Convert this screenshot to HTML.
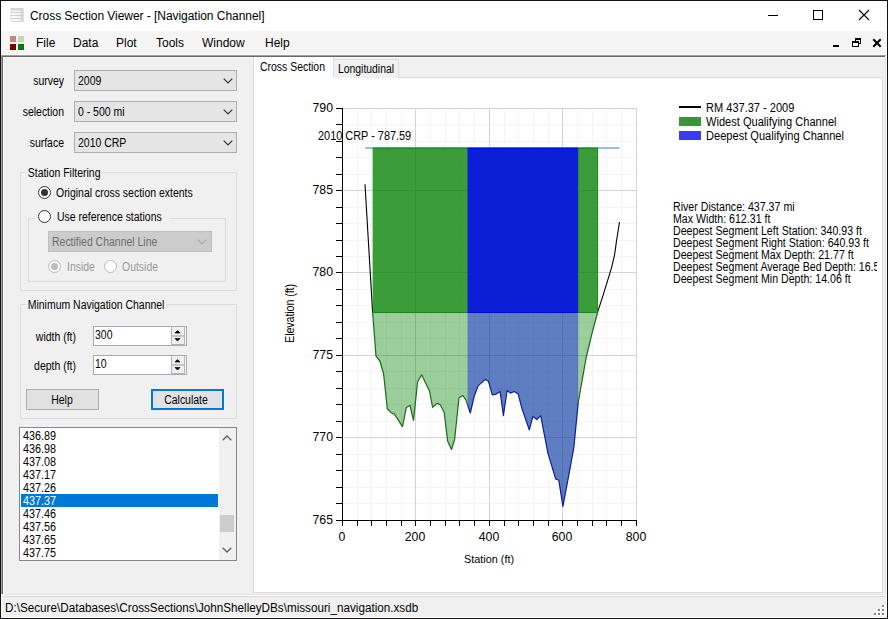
<!DOCTYPE html>
<html><head><meta charset="utf-8">
<style>
*{margin:0;padding:0;box-sizing:border-box}
html,body{width:888px;height:619px;overflow:hidden;background:#f0f0f0;font-family:"Liberation Sans",sans-serif;color:#000}
.a{position:absolute}
.t{position:absolute;white-space:nowrap;font-size:12.0px;line-height:1;transform:scaleX(0.872);transform-origin:0 0}
.mt{position:absolute;white-space:nowrap;font-size:12px;line-height:1}
.combo{position:absolute;background:#e5e5e5;border:1px solid #adadad}
.radio{position:absolute;width:13px;height:13px;border-radius:50%;border:1px solid #333;background:#fff}
.gb{position:absolute;border:1px solid #dcdcdc}
.btn{position:absolute;background:#e1e1e1;border:1px solid #adadad}
</style></head><body>
<!-- window frame -->
<div class="a" style="left:0;top:0;width:888px;height:31px;background:#fff"></div>
<div class="a" style="left:0;top:31px;width:888px;height:24px;background:#f5f5f5"></div>
<div class="a" style="left:0;top:54px;width:888px;height:1px;background:#fcfcfc"></div>
<div class="a" style="left:1px;top:55px;width:885px;height:1px;background:#a0a0a0"></div>
<div class="a" style="left:2px;top:56px;width:883px;height:1px;background:#696969"></div>
<div class="a" style="left:1px;top:55px;width:1px;height:539px;background:#a0a0a0"></div>
<div class="a" style="left:2px;top:56px;width:1px;height:538px;background:#696969"></div>
<div class="a" style="left:3px;top:57px;width:1px;height:537px;background:#fff"></div>
<div class="a" style="left:3px;top:57px;width:882px;height:1px;background:#f8f8f8"></div>
<div class="a" style="left:885px;top:57px;width:1px;height:538px;background:#e3e3e3"></div>
<div class="a" style="left:886px;top:31px;width:1px;height:587px;background:#fff"></div>
<div class="a" style="left:1px;top:617px;width:886px;height:1px;background:#fff"></div>
<!-- outer black border -->
<div class="a" style="left:0;top:0;width:888px;height:1px;background:#111"></div>
<div class="a" style="left:0;top:0;width:1px;height:619px;background:#111"></div>
<div class="a" style="left:887px;top:0;width:1px;height:619px;background:#111"></div>
<div class="a" style="left:0;top:618px;width:888px;height:1px;background:#111"></div>

<!-- title icon -->
<svg class="a" style="left:9px;top:7px" width="16" height="16" viewBox="0 0 16 16">
<defs><linearGradient id="ig" x1="0" x2="1" y1="0" y2="0"><stop offset="0" stop-color="#e8e8e8"/><stop offset="0.2" stop-color="#fbfbfb"/><stop offset="0.7" stop-color="#f0f0f0"/><stop offset="1" stop-color="#c8c8c8"/></linearGradient></defs>
<rect x="1.5" y="1" width="13" height="14" rx="1.5" fill="url(#ig)"/>
<rect x="1.5" y="1" width="13" height="2.5" rx="1" fill="#d4d4d4"/>
<line x1="1.5" y1="5.5" x2="14.5" y2="5.5" stroke="#d0d0d0"/>
<line x1="1.5" y1="8.5" x2="14.5" y2="8.5" stroke="#d0d0d0"/>
<line x1="1.5" y1="11.5" x2="14.5" y2="11.5" stroke="#d0d0d0"/>
<line x1="2" y1="14.5" x2="14" y2="14.5" stroke="#d8d8d8"/>
</svg>
<div class="mt" style="left:30px;top:10px;letter-spacing:-0.05px">Cross Section Viewer - [Navigation Channel]</div>
<!-- window buttons -->
<div class="a" style="left:768px;top:15px;width:10px;height:1px;background:#000"></div>
<div class="a" style="left:813px;top:10px;width:10px;height:10px;border:1px solid #000"></div>
<svg class="a" style="left:858px;top:9px" width="12" height="12" viewBox="0 0 12 12"><path d="M1 1L11 11M11 1L1 11" stroke="#000" stroke-width="1.1"/></svg>

<!-- menu -->
<div class="a" style="left:10px;top:36px;width:6px;height:6px;background:#c38585"></div>
<div class="a" style="left:18px;top:36px;width:6px;height:6px;background:#c8d8aa"></div>
<div class="a" style="left:10px;top:44px;width:6px;height:6px;background:#7a0000"></div>
<div class="a" style="left:18px;top:44px;width:6px;height:6px;background:#007a10"></div>
<div class="mt" style="left:36px;top:37px">File</div>
<div class="mt" style="left:73px;top:37px">Data</div>
<div class="mt" style="left:116px;top:37px">Plot</div>
<div class="mt" style="left:156px;top:37px">Tools</div>
<div class="mt" style="left:202px;top:37px">Window</div>
<div class="mt" style="left:265px;top:37px">Help</div>
<div class="a" style="left:833px;top:45px;width:6px;height:2px;background:#000"></div>
<svg class="a" style="left:850px;top:36px" width="14" height="12" viewBox="0 0 14 12" shape-rendering="crispEdges">
<path d="M5 2h6v2h-6zM10 4h1v4h-1zM9 7h1v1h-1zM5 4h1v1h-1z" fill="#000"/>
<path d="M2 5h7v2h-7zM2 7h1v4h-1zM8 7h1v4h-1zM2 10h7v1h-7z" fill="#000"/>
<path d="M3 7h5v3h-5z" fill="#fff"/>
</svg>
<svg class="a" style="left:872px;top:38px" width="10" height="10" viewBox="0 0 10 10"><path d="M2 2L8 8M8 2L2 8" stroke="#000" stroke-width="2" stroke-linecap="square"/></svg>


<!-- left panel -->

<div class="t" style="left:-36px;top:74.84px;width:100px;text-align:right;transform-origin:100% 0;">survey</div>
<div class="combo" style="left:74px;top:70px;width:163px;height:21px"></div>
<div class="t" style="left:77.5px;top:74.84px;">2009</div>
<svg class="a" style="left:223px;top:78px" width="10" height="6" viewBox="0 0 10 6"><path d="M0.7 0.7L5 5L9.3 0.7" fill="none" stroke="#333" stroke-width="1.2"/></svg>
<div class="t" style="left:-36px;top:105.84px;width:100px;text-align:right;transform-origin:100% 0;">selection</div>
<div class="combo" style="left:74px;top:101px;width:163px;height:21px"></div>
<div class="t" style="left:77.9px;top:105.84px;">0 - 500 mi</div>
<svg class="a" style="left:223px;top:109px" width="10" height="6" viewBox="0 0 10 6"><path d="M0.7 0.7L5 5L9.3 0.7" fill="none" stroke="#333" stroke-width="1.2"/></svg>
<div class="t" style="left:-36px;top:136.84px;width:100px;text-align:right;transform-origin:100% 0;">surface</div>
<div class="combo" style="left:74px;top:132px;width:163px;height:21px"></div>
<div class="t" style="left:77.5px;top:136.84px;">2010 CRP</div>
<svg class="a" style="left:223px;top:140px" width="10" height="6" viewBox="0 0 10 6"><path d="M0.7 0.7L5 5L9.3 0.7" fill="none" stroke="#333" stroke-width="1.2"/></svg>

<div class="gb" style="left:20px;top:172px;width:217px;height:119px"></div>
<div class="t" style="left:27.5px;top:166.84px;background:#f0f0f0;padding:0 2px;margin-left:-2px">Station Filtering</div>
<div class="radio" style="left:38px;top:186px"></div>
<div class="a" style="left:41px;top:189px;width:7px;height:7px;border-radius:50%;background:#333"></div>
<div class="t" style="left:55.9px;top:186.84px;">Original cross section extents</div>
<div class="gb" style="left:28px;top:218px;width:198px;height:64px"></div>
<div class="a" style="left:35px;top:212px;width:134px;height:12px;background:#f0f0f0"></div>
<div class="radio" style="left:38px;top:210px"></div>
<div class="t" style="left:56.5px;top:210.84px;">Use reference stations</div>
<div class="a" style="left:48px;top:231px;width:164px;height:21px;background:#cccccc;border:1px solid #bfbfbf"></div>
<div class="t" style="left:51.7px;top:235.84px;color:#6d6d6d">Rectified Channel Line</div>
<svg class="a" style="left:197px;top:239px" width="10" height="6" viewBox="0 0 10 6"><path d="M0.7 0.7L5 5L9.3 0.7" fill="none" stroke="#a8a8a8" stroke-width="1.2"/></svg>
<div class="radio" style="left:48px;top:260px;border-color:#bcbcbc;background:#f8f8f8"></div>
<div class="a" style="left:51px;top:263px;width:7px;height:7px;border-radius:50%;background:#bcbcbc"></div>
<div class="t" style="left:66.5px;top:261.34px;color:#9a9a9a">Inside</div>
<div class="radio" style="left:104px;top:260px;border-color:#bcbcbc;background:#fff"></div>
<div class="t" style="left:122.3px;top:261.34px;color:#9a9a9a">Outside</div>

<div class="gb" style="left:20px;top:304px;width:217px;height:115px"></div>
<div class="t" style="left:28.0px;top:298.84px;background:#f0f0f0;padding:0 2px;margin-left:-2px">Minimum Navigation Channel</div>
<div class="t" style="left:-24.5px;top:330.84px;width:100px;text-align:right;transform-origin:100% 0;">width (ft)</div>
<div class="a" style="left:93px;top:326px;width:94px;height:20px;background:#fff;border:1px solid #a6aab2"></div>
<div class="t" style="left:94.5px;top:329.34px;">300</div>
<div class="t" style="left:-24.5px;top:359.84px;width:100px;text-align:right;transform-origin:100% 0;">depth (ft)</div>
<div class="a" style="left:93px;top:355px;width:94px;height:20px;background:#fff;border:1px solid #a6aab2"></div>
<div class="t" style="left:94.5px;top:358.34px;">10</div>
<div class="a" style="left:171px;top:327px;width:14px;height:18px;background:#f0f0f0;border:1px solid #b4b4b4;border-top:none"></div>
<div class="a" style="left:172px;top:335px;width:12px;height:2px;background:#c4c4c4"></div>
<svg class="a" style="left:173px;top:329px" width="9" height="14" viewBox="0 0 9 14"><path d="M2 4L4.5 1.5L7 4z" fill="#000" stroke="#000" stroke-width="0.7" stroke-linejoin="round"/><path d="M2 9.5L4.5 12L7 9.5z" fill="#000" stroke="#000" stroke-width="0.7" stroke-linejoin="round"/></svg>
<div class="a" style="left:171px;top:356px;width:14px;height:18px;background:#f0f0f0;border:1px solid #b4b4b4;border-top:none"></div>
<div class="a" style="left:172px;top:364px;width:12px;height:2px;background:#c4c4c4"></div>
<svg class="a" style="left:173px;top:358px" width="9" height="14" viewBox="0 0 9 14"><path d="M2 4L4.5 1.5L7 4z" fill="#000" stroke="#000" stroke-width="0.7" stroke-linejoin="round"/><path d="M2 9.5L4.5 12L7 9.5z" fill="#000" stroke="#000" stroke-width="0.7" stroke-linejoin="round"/></svg>
<div class="btn" style="left:26px;top:389px;width:73px;height:21px"></div>
<div class="t" style="left:11.799999999999997px;top:394.34px;width:100px;text-align:center;transform-origin:50% 0;">Help</div>
<div class="btn" style="left:151px;top:389px;width:73px;height:21px;border:2px solid #0078d7"></div>
<div class="t" style="left:136.2px;top:394.34px;width:100px;text-align:center;transform-origin:50% 0;">Calculate</div>

<div class="a" style="left:19px;top:427px;width:218px;height:134px;background:#fff;border:1px solid #828790"></div>
<div class="t" style="left:22.7px;top:429.64px;transform:scaleX(0.901)">436.89</div>
<div class="t" style="left:22.7px;top:442.64px;transform:scaleX(0.901)">436.98</div>
<div class="t" style="left:22.7px;top:455.64px;transform:scaleX(0.901)">437.08</div>
<div class="t" style="left:22.7px;top:468.64px;transform:scaleX(0.901)">437.17</div>
<div class="t" style="left:22.7px;top:481.64px;transform:scaleX(0.901)">437.26</div>
<div class="a" style="left:21px;top:494px;width:197px;height:13px;background:#0078d7"></div>
<div class="t" style="left:22.7px;top:494.64px;transform:scaleX(0.901);color:#fff">437.37</div>
<div class="t" style="left:22.7px;top:507.64px;transform:scaleX(0.901)">437.46</div>
<div class="t" style="left:22.7px;top:520.64px;transform:scaleX(0.901)">437.56</div>
<div class="t" style="left:22.7px;top:533.64px;transform:scaleX(0.901)">437.65</div>
<div class="t" style="left:22.7px;top:546.64px;transform:scaleX(0.901)">437.75</div>
<div class="a" style="left:219px;top:428px;width:17px;height:132px;background:#f0f0f0"></div>
<div class="a" style="left:220px;top:515px;width:14px;height:17px;background:#cdcdcd"></div>
<svg class="a" style="left:222px;top:435px" width="10" height="6" viewBox="0 0 10 6"><path d="M0.7 5.3L5 1L9.3 5.3" fill="none" stroke="#606060" stroke-width="1.3"/></svg>
<svg class="a" style="left:222px;top:547px" width="10" height="6" viewBox="0 0 10 6"><path d="M0.7 0.7L5 5L9.3 0.7" fill="none" stroke="#606060" stroke-width="1.3"/></svg>
<div class="a" style="left:253px;top:57px;width:1px;height:537px;background:#dcdcdc"></div>


<!-- right tab control -->

<div class="a" style="left:253px;top:77px;width:630px;height:516px;background:#fff;border:1px solid #dcdcdc"></div>
<div class="a" style="left:333px;top:59px;width:66px;height:19px;background:#f0f0f0;border:1px solid #dcdcdc;border-bottom:none"></div>
<div class="a" style="left:253px;top:57px;width:81px;height:21px;background:#fff;border:1px solid #dcdcdc;border-top:none;border-bottom:none"></div>
<div class="a" style="left:260.2px;top:60.84px;font-size:12px;line-height:1;white-space:nowrap;transform:scaleX(0.87);transform-origin:0 0;">Cross Section</div>
<div class="a" style="left:337.6px;top:62.54px;font-size:12px;line-height:1;white-space:nowrap;transform:scaleX(0.866);transform-origin:0 0;">Longitudinal</div>
<svg class="a" style="left:0;top:0" width="888" height="619" viewBox="0 0 888 619">
<path d="M357.5 108V520M371.5 108V520M386.5 108V520M401.5 108V520M430.5 108V520M445.5 108V520M459.5 108V520M474.5 108V520M504.5 108V520M518.5 108V520M533.5 108V520M548.5 108V520M577.5 108V520M592.5 108V520M606.5 108V520M621.5 108V520M342 503.5H636M342 487.5H636M342 470.5H636M342 454.5H636M342 421.5H636M342 404.5H636M342 388.5H636M342 371.5H636M342 338.5H636M342 322.5H636M342 305.5H636M342 289.5H636M342 256.5H636M342 240.5H636M342 223.5H636M342 207.5H636M342 174.5H636M342 157.5H636M342 141.5H636M342 124.5H636" stroke="#f4f4f4" stroke-width="1" shape-rendering="crispEdges"/>
<path d="M415.5 108V520M489.5 108V520M562.5 108V520M636.5 108V520M342 437.5H637M342 355.5H637M342 272.5H637M342 190.5H637M342 108.5H637" stroke="#d3d3d3" stroke-width="1" shape-rendering="crispEdges"/>
<polyline points="365.00,184.20 372.60,312.20 372.62,312.50" fill="none" stroke="#000" stroke-width="1.1"/>
<polyline points="597.59,312.50 597.80,311.70 604.00,292.40 611.70,267.20 614.60,254.60 616.50,241.00 619.50,222.00" fill="none" stroke="#000" stroke-width="1.1"/>
<line x1="365" y1="148" x2="619.5" y2="148" stroke="#9cbdf2" stroke-width="2"/>
<polygon points="372.62,312.50 372.62,312.50 376.00,356.20 379.90,361.00 383.60,374.00 387.30,408.80 391.70,413.10 394.10,413.60 402.50,426.60 406.30,407.60 410.00,405.50 413.50,420.40 417.60,381.70 421.60,374.80 429.50,391.00 432.60,407.30 437.20,403.40 440.30,404.70 444.20,412.50 447.60,441.00 451.50,449.50 454.60,439.60 459.00,397.70 462.80,395.50 466.00,400.10 470.30,413.00 474.20,396.20 478.10,385.90 485.30,379.40 488.40,381.20 492.30,394.90 496.20,394.10 500.10,391.50 503.40,415.60 507.10,390.50 510.40,393.10 514.30,391.50 518.20,394.10 522.10,409.10 529.30,429.80 532.90,416.40 536.80,419.50 540.70,415.60 547.90,453.10 555.70,479.00 558.80,480.20 562.90,506.30 567.10,484.10 573.80,447.90 578.20,402.60 586.10,358.00 591.90,333.80 597.59,312.50 597.59,312.50" fill="rgb(0,128,0)" fill-opacity="0.39"/>
<polygon points="467.50,312.50 467.50,404.60 470.30,413.00 474.20,396.20 478.10,385.90 485.30,379.40 488.40,381.20 492.30,394.90 496.20,394.10 500.10,391.50 503.40,415.60 507.10,390.50 510.40,393.10 514.30,391.50 518.20,394.10 522.10,409.10 529.30,429.80 532.90,416.40 536.80,419.50 540.70,415.60 547.90,453.10 555.70,479.00 558.80,480.20 562.90,506.30 567.10,484.10 573.80,447.90 578.20,402.60 578.20,312.50" fill="rgb(0,0,255)" fill-opacity="0.39"/>
<polyline points="372.62,312.50 376.00,356.20 379.90,361.00 383.60,374.00 387.30,408.80 391.70,413.10 394.10,413.60 402.50,426.60 406.30,407.60 410.00,405.50 413.50,420.40 417.60,381.70 421.60,374.80 429.50,391.00 432.60,407.30 437.20,403.40 440.30,404.70 444.20,412.50 447.60,441.00 451.50,449.50 454.60,439.60 459.00,397.70 462.80,395.50 466.00,400.10 467.50,404.60" fill="none" stroke="#1a6a1a" stroke-width="1.2" stroke-linejoin="round"/>
<polyline points="578.20,402.60 586.10,358.00 591.90,333.80 597.59,312.50" fill="none" stroke="#1a6a1a" stroke-width="1.2" stroke-linejoin="round"/>
<polyline points="467.50,404.60 470.30,413.00 474.20,396.20 478.10,385.90 485.30,379.40 488.40,381.20 492.30,394.90 496.20,394.10 500.10,391.50 503.40,415.60 507.10,390.50 510.40,393.10 514.30,391.50 518.20,394.10 522.10,409.10 529.30,429.80 532.90,416.40 536.80,419.50 540.70,415.60 547.90,453.10 555.70,479.00 558.80,480.20 562.90,506.30 567.10,484.10 573.80,447.90 578.20,402.60" fill="none" stroke="#0c2090" stroke-width="1.2" stroke-linejoin="round"/>
<rect x="372.62" y="148" width="224.96" height="164.50" fill="rgb(0,128,0)" fill-opacity="0.773"/>
<rect x="467.5" y="148" width="110.70" height="164.50" fill="rgb(0,0,255)" fill-opacity="0.8"/>
<path d="M372.62 148H467.5M578.2 148H597.59V312.5H578.2M467.5 312.5H372.62" fill="none" stroke="#108a10" stroke-width="1"/>
<path d="M467.5 148H578.2M578.2 312.5H467.5" fill="none" stroke="#0000e0" stroke-width="1"/>
<path d="M342.5 108V520.5M342 520.5H636M336 520.5H342M336 503.5H342M336 487.5H342M336 470.5H342M336 454.5H342M336 437.5H342M336 421.5H342M336 404.5H342M336 388.5H342M336 371.5H342M336 355.5H342M336 338.5H342M336 322.5H342M336 305.5H342M336 289.5H342M336 272.5H342M336 256.5H342M336 240.5H342M336 223.5H342M336 207.5H342M336 190.5H342M336 174.5H342M336 157.5H342M336 141.5H342M336 124.5H342M336 108.5H342M342.5 520V526M357.5 520V526M371.5 520V526M386.5 520V526M401.5 520V526M415.5 520V526M430.5 520V526M445.5 520V526M459.5 520V526M474.5 520V526M489.5 520V526M504.5 520V526M518.5 520V526M533.5 520V526M548.5 520V526M562.5 520V526M577.5 520V526M592.5 520V526M606.5 520V526M621.5 520V526M636.5 520V526" stroke="#000" stroke-width="1" shape-rendering="crispEdges"/>
</svg><div class="a" style="left:233px;top:100.57px;width:100px;text-align:right;font-size:13.5px;line-height:1;white-space:nowrap;transform:scaleX(0.907);transform-origin:100% 0">790</div>
<div class="a" style="left:233px;top:182.57px;width:100px;text-align:right;font-size:13.5px;line-height:1;white-space:nowrap;transform:scaleX(0.907);transform-origin:100% 0">785</div>
<div class="a" style="left:233px;top:264.57px;width:100px;text-align:right;font-size:13.5px;line-height:1;white-space:nowrap;transform:scaleX(0.907);transform-origin:100% 0">780</div>
<div class="a" style="left:233px;top:347.57px;width:100px;text-align:right;font-size:13.5px;line-height:1;white-space:nowrap;transform:scaleX(0.907);transform-origin:100% 0">775</div>
<div class="a" style="left:233px;top:429.57px;width:100px;text-align:right;font-size:13.5px;line-height:1;white-space:nowrap;transform:scaleX(0.907);transform-origin:100% 0">770</div>
<div class="a" style="left:233px;top:512.57px;width:100px;text-align:right;font-size:13.5px;line-height:1;white-space:nowrap;transform:scaleX(0.907);transform-origin:100% 0">765</div>
<div class="a" style="left:292.0px;top:529.57px;width:100px;text-align:center;font-size:13.5px;line-height:1;white-space:nowrap;transform:scaleX(0.907);transform-origin:50% 0">0</div>
<div class="a" style="left:365.0px;top:529.57px;width:100px;text-align:center;font-size:13.5px;line-height:1;white-space:nowrap;transform:scaleX(0.907);transform-origin:50% 0">200</div>
<div class="a" style="left:439.0px;top:529.57px;width:100px;text-align:center;font-size:13.5px;line-height:1;white-space:nowrap;transform:scaleX(0.907);transform-origin:50% 0">400</div>
<div class="a" style="left:512.0px;top:529.57px;width:100px;text-align:center;font-size:13.5px;line-height:1;white-space:nowrap;transform:scaleX(0.907);transform-origin:50% 0">600</div>
<div class="a" style="left:586.0px;top:529.57px;width:100px;text-align:center;font-size:13.5px;line-height:1;white-space:nowrap;transform:scaleX(0.907);transform-origin:50% 0">800</div>
<div class="a" style="left:463.8px;top:554.27px;font-size:11.5px;line-height:1;white-space:nowrap;transform:scaleX(0.943);transform-origin:0 0;">Station (ft)</div>
<div class="a" style="left:249px;top:306px;width:80px;height:15px;line-height:15px;font-size:13.5px;white-space:nowrap;text-align:center;transform:rotate(-90deg) scaleX(0.79);letter-spacing:-0.1px">Elevation (ft)</div>
<div class="a" style="left:317.5px;top:130.04px;font-size:12px;line-height:1;white-space:nowrap;transform:scaleX(0.909);transform-origin:0 0;">2010 CRP - 787.59</div>
<div class="a" style="left:679px;top:106px;width:22px;height:2px;background:#000"></div>
<div class="a" style="left:679px;top:117px;width:22px;height:9px;background:#3a943a"></div>
<div class="a" style="left:679px;top:131px;width:22px;height:9px;background:#3a3af5"></div>
<div class="t" style="left:706px;top:102px;font-size:12px;transform:scaleX(0.92);transform-origin:0 0">RM 437.37 - 2009</div>
<div class="t" style="left:706px;top:116px;font-size:12px;transform:scaleX(0.923);transform-origin:0 0;letter-spacing:0">Widest Qualifying Channel</div>
<div class="t" style="left:706px;top:130px;font-size:12px;transform:scaleX(0.923);transform-origin:0 0;letter-spacing:0">Deepest Qualifying Channel</div>
<div class="a" style="left:673px;top:201px;width:204px;height:90px;overflow:hidden">
<div class="t" style="left:0;top:0px;font-size:12px;letter-spacing:0;transform:scaleX(0.885);transform-origin:0 0">River Distance: 437.37 mi</div>
<div class="t" style="left:0;top:12px;font-size:12px;letter-spacing:0;transform:scaleX(0.885);transform-origin:0 0">Max Width: 612.31 ft</div>
<div class="t" style="left:0;top:24px;font-size:12px;letter-spacing:0;transform:scaleX(0.885);transform-origin:0 0">Deepest Segment Left Station: 340.93 ft</div>
<div class="t" style="left:0;top:36px;font-size:12px;letter-spacing:0;transform:scaleX(0.885);transform-origin:0 0">Deepest Segment Right Station: 640.93 ft</div>
<div class="t" style="left:0;top:48px;font-size:12px;letter-spacing:0;transform:scaleX(0.885);transform-origin:0 0">Deepest Segment Max Depth: 21.77 ft</div>
<div class="t" style="left:0;top:60px;font-size:12px;letter-spacing:0;transform:scaleX(0.885);transform-origin:0 0">Deepest Segment Average Bed Depth: 16.54 ft</div>
<div class="t" style="left:0;top:72px;font-size:12px;letter-spacing:0;transform:scaleX(0.885);transform-origin:0 0">Deepest Segment Min Depth: 14.06 ft</div>
</div>


<!-- status bar -->
<div class="a" style="left:3px;top:594px;width:883px;height:1px;background:#e3e3e3"></div>
<div class="a" style="left:1px;top:595px;width:886px;height:1px;background:#fff"></div>
<div class="a" style="left:1px;top:596px;width:885px;height:1px;background:#d8d8d8"></div>
<div class="a" style="left:1px;top:595px;width:1px;height:22px;background:#fff"></div>
<div class="a" style="left:5.2px;top:601.64px;font-size:12px;line-height:1;white-space:nowrap;transform:scaleX(0.974);transform-origin:0 0;">D:\Secure\Databases\CrossSections\JohnShelleyDBs\missouri_navigation.xsdb</div>

<div class="a" style="left:882px;top:605px;width:3px;height:3px;background:#fff"></div><div class="a" style="left:878px;top:609px;width:3px;height:3px;background:#fff"></div><div class="a" style="left:882px;top:609px;width:3px;height:3px;background:#fff"></div><div class="a" style="left:874px;top:613px;width:3px;height:3px;background:#fff"></div><div class="a" style="left:878px;top:613px;width:3px;height:3px;background:#fff"></div><div class="a" style="left:882px;top:613px;width:3px;height:3px;background:#fff"></div><div class="a" style="left:882px;top:605px;width:2px;height:2px;background:#808080"></div><div class="a" style="left:878px;top:609px;width:2px;height:2px;background:#808080"></div><div class="a" style="left:882px;top:609px;width:2px;height:2px;background:#808080"></div><div class="a" style="left:874px;top:613px;width:2px;height:2px;background:#808080"></div><div class="a" style="left:878px;top:613px;width:2px;height:2px;background:#808080"></div><div class="a" style="left:882px;top:613px;width:2px;height:2px;background:#808080"></div>
</body></html>
